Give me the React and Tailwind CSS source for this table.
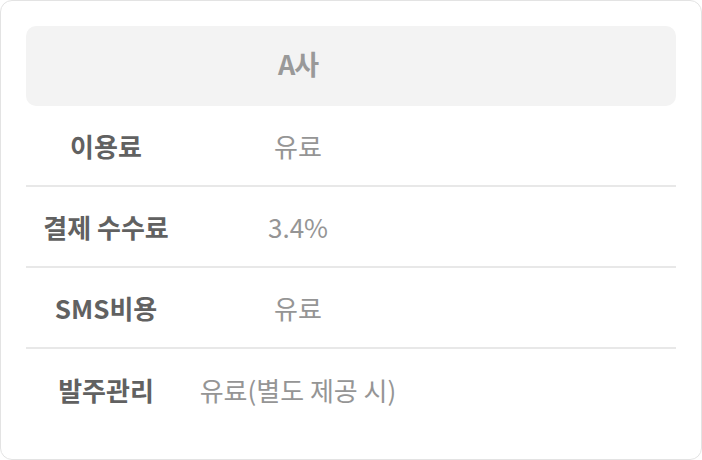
import React from "react";

const rows = [
  { label: "이용료", value: "유료" },
  { label: "결제 수수료", value: "3.4%" },
  { label: "SMS비용", value: "유료" },
  { label: "발주관리", value: "유료(별도 제공 시)" },
];

const App = () => {
  return (
    <div
      className="w-[702px] h-[460px] bg-white"
      style={{ fontFamily: '"Noto Sans CJK KR", "Noto Sans", sans-serif' }}
    >
      <div className="h-full border border-[#e3e3e3] rounded-[12px] px-[25px] pt-[25px]">
        {/* header */}
        <div className="grid grid-cols-[160px_224px_1fr] h-[80px] pb-[4px] items-center rounded-[10px] bg-[#f3f3f3]">
          <span />
          <span className="text-center text-[27px] font-bold text-[#999999] tracking-[-1px]">
            A사
          </span>
        </div>

        {/* fee rows */}
        {rows.map((row, i) => (
          <div
            key={i}
            className={
              i < rows.length - 1
                ? "grid grid-cols-[160px_224px_1fr] h-[81px] items-center border-b-2 border-[#e8e8e8]"
                : "grid grid-cols-[160px_224px_1fr] h-[81px] items-center"
            }
          >
            <span className="text-center text-[26px] font-bold text-[#616161]">
              {row.label}
            </span>
            <span className="text-center text-[26px] font-normal text-[#959595] whitespace-nowrap">
              {row.value}
            </span>
          </div>
        ))}
      </div>
    </div>
  );
};

export default App;
